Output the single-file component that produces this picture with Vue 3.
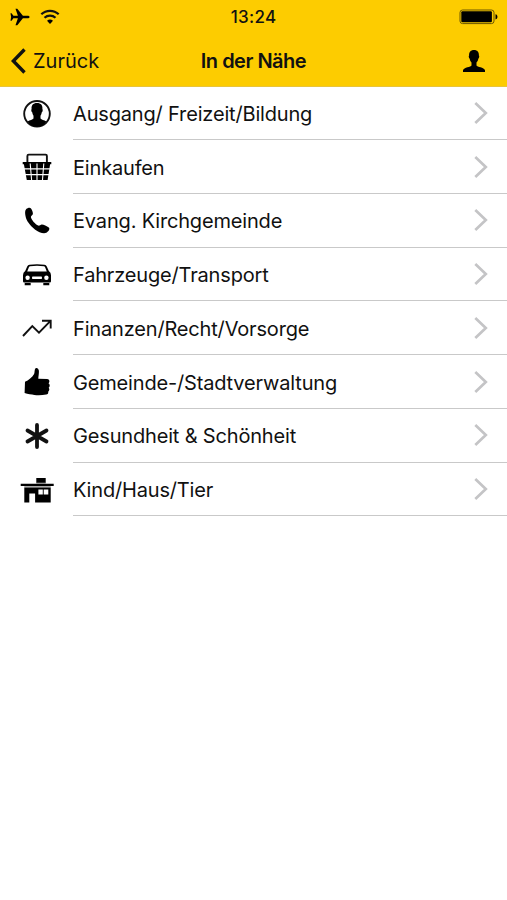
<template>
  <div class="screen">
    <header class="header">
      <div class="status-bar">
        <div class="status-left">
          <svg class="plane" width="20" height="18" viewBox="0 0 20 18">
            <path
              d="M19.600 9c0-.9-1-1.300-2.100-1.300h-4.600L7.300.8H5.500l2.400 6.900H3.400L1.600 5.200H.5L1.100 9 .5 12.800h1.100l1.800-2.500h4.500l-2.400 6.900h1.800l5.600-6.900h4.600c1.100 0 2.100-.4 2.100-1.300z"
            />
          </svg>
          <svg width="20" height="16" viewBox="0 0 20 16">
            <path class="wave" d="M1.300 5.300a12.500 12.500 0 0 1 17.400 0" />
            <path class="wave" d="M4.500 8.800a8 8 0 0 1 11 0" />
            <path d="M7 11.800a4.400 4.400 0 0 1 6 0l-3 3.200z" />
          </svg>
        </div>
        <span class="time">13:24</span>
        <div class="status-right">
          <svg width="40" height="16" viewBox="0 0 40 16">
            <rect class="battery-case" x="1" y="1" width="34" height="13.600" rx="2.500" />
            <rect x="2.300" y="2.300" width="30.600" height="11" rx="1" />
            <path d="M36.500 5.200c1.400.2 1.900 1.300 1.900 2.600s-.5 2.400-1.900 2.600z" />
          </svg>
        </div>
      </div>
      <nav class="nav-bar">
        <button class="back-btn">
          <svg width="15" height="26" viewBox="0 0 15 26">
            <path class="back-arrow" d="M13.500 1.500L2.300 13l11.200 11.500" />
          </svg>
          <span>Zurück</span>
        </button>
        <h1 class="title">In der Nähe</h1>
        <button class="profile-btn">
          <svg width="24" height="24" viewBox="0 0 24 24">
            <path
              d="M12 1C8.700 1 6.900 3.100 7.100 6.500c-.6.300-.4 2.700.6 3.200.3 1.700 1 2.900 1.800 3.700v3.200c-.5 1.700-7.600 1.600-8.500 4.700V23h22v-1.700c-.9-3.100-8-3-8.500-4.700v-3.200c.8-.8 1.500-2 1.800-3.700 1-.5 1.200-2.900.6-3.200C17.100 3.100 15.300 1 12 1z"
            />
          </svg>
        </button>
      </nav>
    </header>

    <ul class="category-list">
      <li v-for="category in categories" :key="category.icon" class="category">
        <svg class="icon" width="36" height="36" viewBox="0 0 36 36">
          <g v-if="category.icon === 'person'">
            <circle class="line" cx="18" cy="17.800" r="12.800" />
            <path
              d="M18 7c-4 0-5.700 2.300-5.400 5.900-.6.400-.3 2.900.6 3.300.2 1.500.7 2.700 1.300 3.500v2.700c-.9 1.300-3.600 1.500-5.900 3C10.500 29 14 30.800 18 30.800s7.500-1.800 9.400-5.400c-2.300-1.500-5-1.700-5.900-3v-2.700c.6-.8 1.100-2 1.300-3.500.9-.4 1.200-2.900.6-3.300C23.700 9.300 22 7 18 7z"
            />
          </g>
          <g v-else-if="category.icon === 'basket'">
            <path class="line" d="M8.400 14V6.900q0-1.300 1.300-1.300h16.900q1.300 0 1.300 1.300V14" />
            <path d="M3.700 13h28.600v2.300h-1.200L28.600 31H7.800L4.900 15.300H3.700z" />
            <path
              class="gap"
              d="M4.800 19.900h26.400M5.800 25.600h24.400M11.200 14.500L12.600 31M18 14.500V31M24.800 14.500L23.500 31"
            />
          </g>
          <path
            v-else-if="category.icon === 'phone'"
            d="M7.100 6.300c1.500-1.500 3.900-2 4.900-.9 1.100 1.300 2.100 4.300 1.900 5.500-.2 1.300-2.100 1.600-2 3.100.2 2.600 4.700 7.600 7.300 8.600 1.300.5 2.300-1.300 3.700-1.200 1.700.1 5.100 1.700 6.900 3.200 1.500 1.300-.3 4.100-2.500 5.200-2.700 1.300-7.600-.3-11.400-3.400C10.700 22.300 7.300 17.500 6.500 13c-.5-2.900-.7-5.300.6-6.700z"
          />
          <g v-else-if="category.icon === 'car'">
            <path
              fill-rule="evenodd"
              d="M10.500 7.700Q18 6.700 25.500 7.700q1.600.2 2.300 1.900l2 4.500q2.200 1.300 2.200 4.200v6q0 1.200-1.200 1.200H5.200Q4 25.500 4 24.300v-6q0-2.900 2.200-4.200l2-4.500Q8.900 7.900 10.500 7.700zm.6 1.500q-.8.100-1.200 1.100l-1.700 4.200h19.600l-1.700-4.200q-.4-1-1.200-1.100-6.900-.8-13.800 0z"
            />
            <path d="M5.700 26h6v2.300h-6zM24.300 26h6v2.300h-6z" />
            <circle class="hole" cx="8.600" cy="20.700" r="2.200" />
            <circle class="hole" cx="27.400" cy="20.700" r="2.200" />
            <rect class="hole" x="13" y="19.400" width="10" height="2.600" rx=".8" />
          </g>
          <path
            v-else-if="category.icon === 'chart'"
            class="line"
            d="M4 26l9.300-10 6.700 6.700 11.500-11.800M23 10.700h8.700v7.700"
          />
          <path
            v-else-if="category.icon === 'thumb'"
            d="M6 17.800c3.500-1.500 7.200-4.500 9.100-7.800.7-1.500.3-4.600 1.300-5.600 1.200-1.100 3.300.1 3.500 2.400.2 2.800-.6 5.700-.6 8l8.900.2c2.300.2 2.900 3 1.300 4.300 1.600 1 1.600 3.500.2 4.500 1 1.200.8 3.100-.5 3.900.3 1.700-.5 2.600-2 2.800-3.900.9-8.700.9-11.800.5-3-.4-6.500-.9-9.800-1.900z"
          />
          <path
            v-else-if="category.icon === 'asterisk'"
            class="star"
            d="M18 7v22M8.500 12.500l19 11M27.500 12.500l-19 11"
          />
          <g v-else>
            <path class="shade" d="M17.300 10.300h9.400v1.500h-9.400zM5.300 14h26.400v1.500H5.300z" />
            <path d="M17.300 6h9.400v4.700h-9.400zM1.700 11.700h33v2.300h-33z" />
            <path d="M5.300 15.400h26.400v15.100H16.100v-9h-5.800v9h-5z" />
            <path class="hole" d="M19.400 17.500h4.400v4.900h-4.400zM24.700 17.500h4.600v4.900h-4.600z" />
          </g>
        </svg>
        <div class="category-body">
          <span class="category-name">{{ category.name }}</span>
          <svg class="chevron" width="16" height="24" viewBox="0 0 16 24">
            <path d="M2.300 2l10.500 10L2.300 22" />
          </svg>
        </div>
      </li>
    </ul>
  </div>
</template>

<script setup>
const categories = [
  { icon: "person", name: "Ausgang/ Freizeit/Bildung" },
  { icon: "basket", name: "Einkaufen" },
  { icon: "phone", name: "Evang. Kirchgemeinde" },
  { icon: "car", name: "Fahrzeuge/Transport" },
  { icon: "chart", name: "Finanzen/Recht/Vorsorge" },
  { icon: "thumb", name: "Gemeinde-/Stadtverwaltung" },
  { icon: "asterisk", name: "Gesundheit & Schönheit" },
  { icon: "house", name: "Kind/Haus/Tier" },
];
</script>

<style>
body {
  background: #fff;
}
</style>

<style scoped>
.screen {
  min-height: 900px;
  background: #fff;
  color: #111;
  font-family: "Inter", "Liberation Sans", sans-serif;
}

.header {
  box-sizing: border-box;
  height: 87.4px;
  background: #fdcc00;
  border-bottom: 1px solid #e8c43c;
  color: #111;
}

.status-bar {
  display: grid;
  grid-template-columns: 1fr auto 1fr;
  align-items: center;
  height: 34px;
  padding: 0 8px;
}

.status-left {
  display: flex;
  align-items: center;
  gap: 10px;
  padding-left: 2px;
}

.status-right {
  display: flex;
  justify-content: flex-end;
}

.wave {
  fill: none;
  stroke: #111;
  stroke-width: 2.2;
}

.battery-case {
  fill: none;
  stroke: #6b5700;
  stroke-width: 1;
}

.time {
  font-size: 17px;
  font-weight: 500;
  letter-spacing: 0.3px;
}

.nav-bar {
  display: grid;
  grid-template-columns: 1fr auto 1fr;
  align-items: center;
  height: 53px;
  padding: 0 21px;
}

.back-btn,
.profile-btn {
  display: flex;
  align-items: center;
  padding: 0;
  border: none;
  background: none;
  color: inherit;
  font: inherit;
}

.back-btn {
  gap: 7px;
  margin-left: -10px;
  font-size: 20px;
}

.back-arrow {
  fill: none;
  stroke: #111;
  stroke-width: 3.4;
}

.profile-btn {
  justify-self: end;
}

.title {
  margin: 0;
  font-size: 20px;
  font-weight: 600;
  letter-spacing: -0.5px;
}

.category-list {
  margin: 0;
  padding: 0;
  list-style: none;
}

.category {
  display: flex;
  align-items: center;
  height: 53.75px;
}

.category:first-child {
  height: 52.8px;
}

.icon {
  flex: none;
  margin: 0 18px 0 19px;
}

.line {
  fill: none;
  stroke: #111;
  stroke-width: 1.9;
}

.gap {
  fill: none;
  stroke: #fff;
  stroke-width: 1.1;
}

.star {
  fill: none;
  stroke: #111;
  stroke-width: 3.8;
  stroke-linecap: round;
}

.hole {
  fill: #fff;
}

.shade {
  fill: #aaa;
}

.category-body {
  box-sizing: border-box;
  display: flex;
  flex: 1;
  align-items: center;
  justify-content: space-between;
  height: 100%;
  padding-right: 18px;
  border-bottom: 1px solid #c9c9c9;
}

.category-name {
  padding-top: 2px;
  font-size: 20px;
  letter-spacing: -0.17px;
  white-space: nowrap;
}

.chevron path {
  fill: none;
  stroke: #c4c4c6;
  stroke-width: 2.7;
}
</style>
